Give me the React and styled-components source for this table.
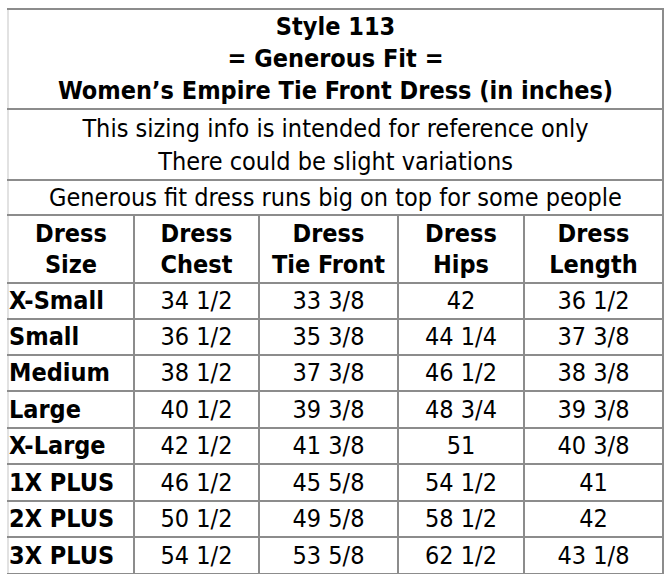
import React from "react";
import styled, { createGlobalStyle } from "styled-components";

const Global = createGlobalStyle`
  html, body { margin: 0; padding: 0; background: #ffffff; }
  body { font-family: "DejaVu Sans Condensed", "DejaVu Sans", sans-serif; font-stretch: condensed; color: #000; }
`;

const Page = styled.div`
  padding: 8px 0 0 7px;
`;

const Table = styled.table`
  width: 655px;
  border-collapse: collapse;
  table-layout: fixed;
  font-family: "DejaVu Sans Condensed", "DejaVu Sans", sans-serif;
  font-stretch: condensed;
  font-size: 25px;
  color: #000;
  border-left: 2px solid #e2e2e2;
  border-top: 2px solid #8c8c8c;
  border-right: 2px solid #8c8c8c;
  border-bottom: 2px solid #8c8c8c;
`;

const Row = styled.tr`
  height: ${(p) => p.$h}px;
`;

const Cell = styled.td`
  border: 2px solid #8c8c8c;
  padding: 0;
  text-align: ${(p) => p.$align || "center"};
  font-weight: ${(p) => (p.$bold ? 700 : 400)};
  line-height: ${(p) => p.$lh || 30}px;
  white-space: nowrap;
  overflow: hidden;
  vertical-align: middle;
  &:first-child { border-left-color: #e2e2e2; }
`;

const Line = styled.div``;

const cols = [126, 125, 139, 126, 139];

const rows = [
  ["X-Small", "34 1/2", "33 3/8", "42", "36 1/2"],
  ["Small", "36 1/2", "35 3/8", "44 1/4", "37 3/8"],
  ["Medium", "38 1/2", "37 3/8", "46 1/2", "38 3/8"],
  ["Large", "40 1/2", "39 3/8", "48 3/4", "39 3/8"],
  ["X-Large", "42 1/2", "41 3/8", "51", "40 3/8"],
  ["1X PLUS", "46 1/2", "45 5/8", "54 1/2", "41"],
  ["2X PLUS", "50 1/2", "49 5/8", "58 1/2", "42"],
  ["3X PLUS", "54 1/2", "53 5/8", "62 1/2", "43 1/8"],
];
const rowHeights = [36, 36, 36, 37, 36, 37, 36, 37];

const headers = [
  ["Dress", "Size"],
  ["Dress", "Chest"],
  ["Dress", "Tie Front"],
  ["Dress", "Hips"],
  ["Dress", "Length"],
];

export default function App() {
  return (
    <>
      <Global />
      <Page>
        <Table>
          <colgroup>
            {cols.map((w, i) => (
              <col key={i} style={{ width: w }} />
            ))}
          </colgroup>
          <tbody>
            <Row $h={100}>
              <Cell colSpan={5} $bold $lh={32}>
                <Line>Style 113</Line>
                <Line>= Generous Fit =</Line>
                <Line>Women’s Empire Tie Front Dress (in inches)</Line>
              </Cell>
            </Row>
            <Row $h={71}>
              <Cell colSpan={5} $lh={33}>
                <Line>This sizing info is intended for reference only</Line>
                <Line>There could be slight variations</Line>
              </Cell>
            </Row>
            <Row $h={35}>
              <Cell colSpan={5}>Generous fit dress runs big on top for some people</Cell>
            </Row>
            <Row $h={68}>
              {headers.map((h, i) => (
                <Cell key={i} $bold $lh={31}>
                  <Line>{h[0]}</Line>
                  <Line>{h[1]}</Line>
                </Cell>
              ))}
            </Row>
            {rows.map((r, ri) => (
              <Row key={ri} $h={rowHeights[ri]}>
                {r.map((v, ci) => (
                  <Cell key={ci} $bold={ci === 0} $align={ci === 0 ? "left" : "center"}>
                    {v}
                  </Cell>
                ))}
              </Row>
            ))}
          </tbody>
        </Table>
      </Page>
    </>
  );
}
